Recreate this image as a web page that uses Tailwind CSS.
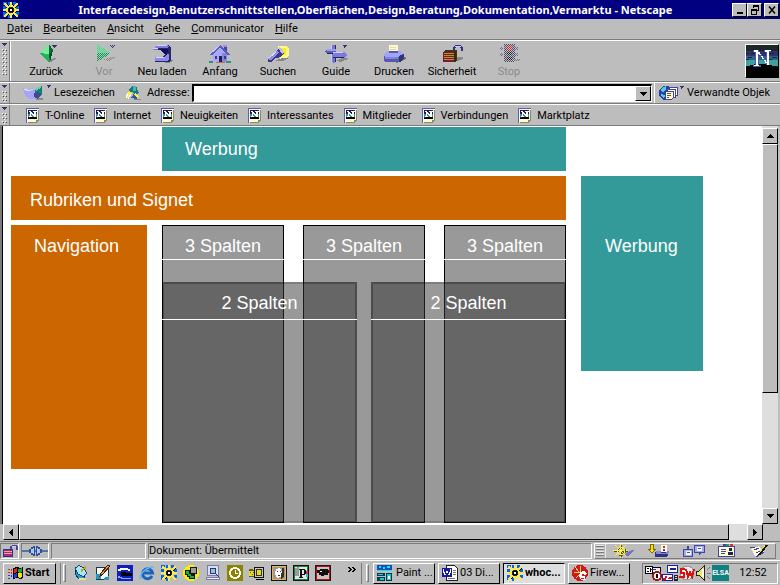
<!DOCTYPE html>
<html lang="de">
<head>
    <meta charset="UTF-8">
    <meta name="viewport" content="width=device-width, initial-scale=1.0">
    <title>Interfacedesign - Netscape</title>
    <script src="https://cdn.jsdelivr.net/npm/@tailwindcss/browser@4"></script>
</head>
<body class="flex min-h-screen flex-col overflow-hidden bg-[#bdbdbd] font-[Roboto,Arial,sans-serif] text-[11px] leading-[14px] text-black">

    <!-- shared icons -->
    <svg class="absolute size-0">
        <defs>
            <symbol id="dither" viewBox="0 0 24 20">
                <path d="M0 .5h24M0 2.500h24M0 4.500h24M0 6.500h24M0 8.500h24M0 10.500h24M0 12.500h24M0 14.500h24M0 16.500h24M0 18.500h24M1 1.500h23M1 3.500h23M1 5.500h23M1 7.500h23M1 9.500h23M1 11.500h23M1 13.500h23M1 15.500h23M1 17.500h23M1 19.500h23" stroke="#bdbdbd" stroke-dasharray="1 1"/>
            </symbol>
            <symbol id="wheel" viewBox="0 0 16 16">
                <path d="M0 0h4v3H0zM5 0h2v3H5zM10 0h3v3h-3zM0 4h3v3H0zM13 4h3v3h-3zM13 10h3v3h-3zM0 10h3v5H0zM5 13h2v3H5z" fill="#0068e8"/>
                <path d="M8 1v15M1 8h15M3 3l11 11M14 3L3 14" stroke="#000" stroke-width="2"/>
                <circle cx="8" cy="8" r="4" fill="none" stroke="#000" stroke-width="2"/>
                <path d="M7 0h2v4H7zM7 12h2v4H7zM0 7h4v2H0zM12 7h4v2h-4z" fill="#ffe84a"/>
                <path d="M1 1h2v1h1v1h1v2H3V4H2V3H1zM15 1v2h-1v1h-1v1h-2V3h1V2h1V1zM1 15v-2h1v-1h1v-1h2v2H4v1H3v1zM15 15h-2v-1h-1v-1h-1v-2h2v1h1v1h1z" fill="#ffe84a"/>
                <path d="M6 3h4v1h1v1h1v1h1v4h-1v1h-1v1h-1v1H6v-1H5v-1H4v-1H3V6h1V5h1V4h1zM6 5v1H5v4h1v1h4v-1h1V6h-1V5z" fill="#ffe84a" fill-rule="evenodd"/>
                <path d="M6 5h4v1H6zM5 6h1v4H5zM10 6h1v4h-1zM6 10h4v1H6z" fill="#222"/>
                <path d="M7 7h2v2H7z" fill="#fff"/>
            </symbol>
            <symbol id="page" viewBox="0 0 13 15">
                <path d="M0 0h13v12l-3 3H0z" fill="#fffbc8"/>
                <path d="M0 0h13v1H1v14H0z" fill="#5a5ac8"/>
                <path d="M2 2h9v9H2z" fill="#1c1c50"/>
                <path d="M2 6h9v3H2z" fill="#3a8fa0"/>
                <path d="M2 10l3-1h4l2 1v1H2z" fill="#000"/>
                <path d="M3 3h2v1h1v1h1v1h1V4H7V3h4v1h-1v5H8V8H7V7H6V6H5v2h1v1H3V8h1V4H3z" fill="#fff"/>
                <path d="M12 2h1v10h-1zM10 12h3v1h-1v1h-1v1h-1zM2 14h8v1H2z" fill="#8a8a70"/>
            </symbol>
            <symbol id="grip" viewBox="0 0 6 36">
                <path d="M0 0h5v1H4v1H3v1H2V2H1V1H0z" fill="#33336b"/>
                <path d="M0 6.500h1M3 6.500h1M0 10.500h1M3 10.500h1M0 14.500h1M3 14.500h1M0 18.500h1M3 18.500h1M0 22.500h1M3 22.500h1M0 26.500h1M3 26.500h1M0 30.500h1M3 30.500h1" stroke="#fff"/>
                <path d="M1 7.500h1M4 7.500h1M1 11.500h1M4 11.500h1M1 15.500h1M4 15.500h1M1 19.500h1M4 19.500h1M1 23.500h1M4 23.500h1M1 27.500h1M4 27.500h1M1 31.500h1M4 31.500h1" stroke="#444"/>
                <path d="M2 8.500h1M2 12.500h1M2 16.500h1M2 20.500h1M2 24.500h1M2 28.500h1" stroke="#fff"/>
            </symbol>
        </defs>
    </svg>

    <!-- title bar -->
    <header class="flex h-[19px] shrink-0 items-center bg-[#000080] pr-px pl-[3px] text-white">
        <svg class="size-4 shrink-0" shape-rendering="crispEdges"><use href="#wheel"/></svg>
        <h1 class="min-w-0 flex-1 overflow-hidden text-center font-['Noto_Sans',sans-serif] text-[11px] font-bold whitespace-nowrap">Interfacedesign,Benutzerschnittstellen,Oberflächen,Design,Beratung,Dokumentation,Vermarktu - Netscape</h1>
        <div class="flex text-black">
            <button aria-label="Minimieren" class="flex h-3.5 w-[15px] items-center justify-center border border-t-white border-r-black border-b-black border-l-white bg-[#bdbdbd]"><svg width="10" height="10" shape-rendering="crispEdges"><path d="M2 7h6v2H2z"/></svg></button>
            <button aria-label="Wiederherstellen" class="flex h-3.5 w-[15px] items-center justify-center border border-t-white border-r-black border-b-black border-l-white bg-[#bdbdbd]"><svg width="10" height="10" shape-rendering="crispEdges"><path d="M3 0h6v6H7V5h1V2H4v1H3zM1 4h6v6H1zM2 6v3h4V6z" fill-rule="evenodd"/></svg></button>
            <button aria-label="Schließen" class="ml-0.5 flex h-3.5 w-[15px] items-center justify-center border border-t-white border-r-black border-b-black border-l-white bg-[#bdbdbd]"><svg width="10" height="10"><path d="M2 1.500l6 7M8 1.500l-6 7" stroke="#000" stroke-width="1.500"/></svg></button>
        </div>
    </header>

    <!-- menu -->
    <nav class="flex h-[21px] shrink-0 items-center gap-[11px] border-b border-[#7b7b7b] pl-[7px]">
        <a href="#"><u>D</u>atei</a>
        <a href="#"><u>B</u>earbeiten</a>
        <a href="#"><u>A</u>nsicht</a>
        <a href="#"><u>G</u>ehe</a>
        <a href="#"><u>C</u>ommunicator</a>
        <a href="#"><u>H</u>ilfe</a>
    </nav>

    <!-- navigation toolbar -->
    <div class="flex h-[42px] shrink-0 items-center border-t border-b border-t-white border-b-[#7b7b7b]">
        <div class="flex h-full w-[10px] shrink-0 border-r border-[#7b7b7b] pt-0.5 pl-0.5"><svg width="6" height="36" shape-rendering="crispEdges"><use href="#grip"/></svg></div>
        <div class="flex h-full flex-1 border-l border-white pl-1.5">
            <button class="flex w-[58px] flex-col items-center gap-px pt-[3px]">
                <svg width="24" height="20" shape-rendering="crispEdges">
                    <path d="M14 17l6-3h2v1l-5 3z" fill="#888"/>
                    <path d="M5 9L15 0l4 6-3 12z" fill="#169447"/>
                    <path d="M5 9L15 0v10z" fill="#7be89b"/>
                    <path d="M5 9l10 1v8z" fill="#24b35a"/>
                    <path d="M15 0l4 6-4 4z" fill="#0c6b3c"/>
                    <path d="M15 10l4-4-3 12z" fill="#064c30"/>
                    <path d="M18 1h5v1h-1v1h-1v1h-1V3h-1V2h-1z" fill="#33336b"/>
                </svg>
                <span>Zurück</span>
            </button>
            <button disabled class="flex w-[58px] flex-col items-center gap-px pt-[3px] text-[#8a8a8a]">
                <svg width="24" height="20" shape-rendering="crispEdges">
                    <path d="M11 16l8-3h4v1l-6 3z" fill="#888"/>
                    <path d="M5 0v18l14-9z" fill="#00a050"/>
                    <path d="M5 0v9h14z" fill="#30e880"/>
                    <path d="M18 1h5v1h-1v1h-1v1h-1V3h-1V2h-1z" fill="#33336b"/>
                    <use href="#dither" width="24" height="20"/>
                </svg>
                <span>Vor</span>
            </button>
            <button class="flex w-[58px] flex-col items-center gap-px pt-[3px]">
                <svg width="24" height="20" shape-rendering="crispEdges">
                    <path d="M16 16h7v1l-4 2h-4z" fill="#888"/>
                    <path d="M7 1h11l3 2v13l-2 2H5v-5h8l2-3-5-4H3V4h2z" fill="#26266e"/>
                    <path d="M3 5l4-4h10l2 2-2 1H8v2H3z" fill="#7c7cdc"/>
                    <path d="M5 13h9l3-3h2v5l-2 2H5z" fill="#8c8cec"/>
                    <path d="M10 5h8l-1 6-6-4z" fill="#10105c"/>
                    <path d="M7 1.500h10M6 13.500h8M3 4.500h5" stroke="#d5d5ff"/>
                </svg>
                <span>Neu laden</span>
            </button>
            <button class="flex w-[58px] flex-col items-center gap-px pt-[3px]">
                <svg width="24" height="20" shape-rendering="crispEdges">
                    <path d="M1 17h5l-1 2H1zM19 17h4v2h-5z" fill="#2b9478"/>
                    <path d="M16 2h3v7h-3z" fill="#44448f"/>
                    <path d="M15 1h4v2h-4z" fill="#9494f0"/>
                    <path d="M5 9l7-6 7 6v9H5z" fill="#a9a9fa"/>
                    <path d="M14 9h5v9h-5z" fill="#8585e0"/>
                    <path d="M12 1L1 11h3l8-7 8 7h3z" fill="#5b5bc0"/>
                    <path d="M12 1L1 11" stroke="#c6c6ff"/>
                    <path d="M11 12h3v7h-3z" fill="#20204e"/>
                    <path d="M7 12h2v3H7zM16 12h2v3h-2z" fill="#3a3a88"/>
                    <path d="M8 18h9v1H8z" fill="#c86b52"/>
                </svg>
                <span>Anfang</span>
            </button>
            <button class="flex w-[58px] flex-col items-center gap-px pt-[3px]">
                <svg width="24" height="20" shape-rendering="crispEdges">
                    <path d="M12 2h8l3 3v7l-4 3h-5z" fill="#fff78a"/>
                    <path d="M15 4h5v7h-5z" fill="#ffe820"/>
                    <path d="M9 17l7-3h7l-6 3z" fill="#888"/>
                    <path d="M2 15l8-8 4-4 4 6-3 4-5 1-5 4H2z" fill="#3a3a88"/>
                    <path d="M3 14l8-7 2 2-8 7H3z" fill="#8d8de8"/>
                    <path d="M12 4l2-1 4 6-2 1z" fill="#b9b9ff"/>
                    <path d="M3 14l7-6" stroke="#dedeff"/>
                </svg>
                <span>Suchen</span>
            </button>
            <button class="flex w-[58px] flex-col items-center gap-px pt-[3px]">
                <svg width="24" height="20" shape-rendering="crispEdges">
                    <path d="M12 17l6-3h6v1l-7 3z" fill="#888"/>
                    <path d="M7 1h5v17l-2 1-3-1z" fill="#7474d2"/>
                    <path d="M11 1h1v17h-1z" fill="#282864"/>
                    <path d="M1 7l2-2h9v5H3z" fill="#5c5cba"/>
                    <path d="M3 5h9v2H3z" fill="#9c9cf2"/>
                    <path d="M9 8h11l3 3-3 3H9z" fill="#7c7cdc"/>
                    <path d="M9 13h11v1H9zM3 9h6v1H3z" fill="#26265e"/>
                    <path d="M9 8.500h10M7.500 1v4M7.500 10v8" stroke="#cfcfff"/>
                    <path d="M19 1h4v1h-1v1h-1v1h-1V2h-1z" fill="#33336b"/>
                </svg>
                <span>Guide</span>
            </button>
            <button class="flex w-[58px] flex-col items-center gap-px pt-[3px]">
                <svg width="24" height="20" shape-rendering="crispEdges">
                    <path d="M10 17l12-4h2v2l-9 4z" fill="#777"/>
                    <path d="M7 1h9v8H7z" fill="#fff8ce"/>
                    <path d="M8 3.500h6M8 5.500h6" stroke="#e4d8a8"/>
                    <path d="M2 10l4-3h13l3 4v4l-4 3H3l-1-2z" fill="#5656b4"/>
                    <path d="M2 10l4-3h1v2h9V7h3l2 3-4 3H3z" fill="#a4a4f6"/>
                    <path d="M3 13h13v2H3z" fill="#8383e0"/>
                    <path d="M17 12l5-2v5l-4 3h-1z" fill="#33337a"/>
                    <path d="M13 14h2v1h-2z" fill="#00d020"/>
                </svg>
                <span>Drucken</span>
            </button>
            <button class="flex w-[58px] flex-col items-center gap-px pt-[3px]">
                <svg width="24" height="20" shape-rendering="crispEdges">
                    <path d="M16 13h7v2l-6 2z" fill="#888"/>
                    <path d="M14 8V4l2-2h4l2 2v3" fill="none" stroke="#33338c" stroke-width="2"/>
                    <path d="M15 3l2-1h4" fill="none" stroke="#ccf"/>
                    <path d="M3 8l2-2h12v10l-2 2H3z" fill="#48301a"/>
                    <path d="M3 8h11v10H3z" fill="#801830"/>
                    <path d="M4 9.500h10M4 11.500h10M4 13.500h10M4 15.500h10" stroke="#a89828"/>
                    <path d="M14 8l2-2v10l-2 2z" fill="#303000"/>
                </svg>
                <span>Sicherheit</span>
            </button>
            <button disabled class="flex w-[56px] flex-col items-center gap-px pt-[3px] text-[#8a8a8a]">
                <svg width="24" height="20" shape-rendering="crispEdges">
                    <path d="M7 0h11v18H7z" fill="#50506c"/>
                    <path d="M3 3h3v3H3zM3 9h3v3H3zM18 3h3v3h-3zM18 9h3v3h-3z" fill="#6c6ca0"/>
                    <path d="M10 2h5v4h-5z" fill="#f02020"/>
                    <path d="M10 8h5v3h-5zM10 13h5v3h-5z" fill="#222"/>
                    <path d="M15 15h8v2h-7z" fill="#777"/>
                    <use href="#dither" width="24" height="20"/>
                </svg>
                <span>Stop</span>
            </button>
        </div>
        <button aria-label="Netscape" class="mr-px border border-t-white border-r-black border-b-black border-l-white">
            <svg width="32" height="32" shape-rendering="crispEdges" class="block">
                <path d="M0 0h32v32H0z" fill="#1c2828"/>
                <path d="M0 6h32v5H0z" fill="#30306c"/>
                <path d="M0 11h32v4H0z" fill="#2b6480"/>
                <path d="M0 15h32v6H0z" fill="#3fa0a0"/>
                <path d="M0 8h3v1H0zM5 8h4v1H5zM24 8h4v1h-4zM2 12h4v1H2zM26 12h5v1h-5zM0 14h3v1H0zM22 14h4v1h-4z" fill="#15203c"/>
                <path d="M0 21h4v-1h4v-1h14v1h4v1h4v1h2v10H0z" fill="#000"/>
                <path d="M7 5h6v2h1v2h2v2h1v2h2v2h1V7h-2V5h7v2h-2v13h-3v-2h-1v-2h-2v-2h-1v-2h-2v-2h-1v10h2v2H7v-2h2V7H7z" fill="#5252ba"/>
                <path d="M8 5h4v2h2v2h1v2h2v2h1v2h2v2h1V7h-2V5h6v1h-2v14h-2v-2h-2v-2h-1v-2h-2v-2h-1v-2h-2V9h-1v11h1v1H8v-1h2V7H8z" fill="#fff"/>
            </svg>
        </button>
    </div>

    <!-- location bar -->
    <div class="flex h-[22px] shrink-0 items-center border-t border-b border-t-white border-b-[#7b7b7b]">
        <div class="h-full w-[10px] shrink-0 overflow-hidden border-r border-[#7b7b7b] pt-0.5 pl-0.5"><svg width="6" height="36" shape-rendering="crispEdges"><use href="#grip"/></svg></div>
        <button class="ml-3 flex items-center gap-0.5">
            <svg width="30" height="16" shape-rendering="crispEdges">
                <path d="M12 13h9v2h-7z" fill="#888"/>
                <path d="M12 5l8-4v9l-6 4z" fill="#14806c"/>
                <path d="M13 4l6-3v2l-5 3z" fill="#62d0b0"/>
                <path d="M1 3l5 2 4-2 3 3 2 8H8l-5-3z" fill="#a4a4fa"/>
                <path d="M12 8l3-1 4 2-3 5-4-2z" fill="#44449a"/>
                <path d="M2 4l5 2 4-2" fill="none" stroke="#dedeff"/>
                <path d="M25 0h4v1h-1v1h-1v1h-1V1h-1z" fill="#33336b"/>
            </svg>
            Lesezeichen
        </button>
        <svg class="ml-2.5 shrink-0" width="16" height="15" shape-rendering="crispEdges">
            <path d="M8 13h8v1H9z" fill="#888"/>
            <path d="M5 2l3-2h3l3 7-4 2-3-4-3 5H2z" fill="#187a78"/>
            <path d="M8 0h3v5H8z" fill="#4cb4ac"/>
            <path d="M1 9l3-4 3 2-4 5H1z" fill="#ffee40"/>
            <path d="M6 12l4-6 4 5-3 2z" fill="#2c54b8"/>
            <path d="M9 8l2-1 3 4-2 1z" fill="#ffee40"/>
            <path d="M3 7l-2 5M6 8l-3 5" stroke="#fff"/>
        </svg>
        <label for="adresse" class="ml-1.5 pr-0.5">Adresse:</label>
        <div class="flex h-[18px] min-w-0 flex-1 border-t-2 border-r border-b border-l-2 border-t-black border-r-white border-b-white border-l-black bg-white">
            <input id="adresse" type="text" class="min-w-0 flex-1 px-1 outline-none">
            <button aria-label="Adressliste öffnen" class="flex w-4 items-center justify-center border border-t-white border-r-black border-b-black border-l-white bg-[#bdbdbd]"><svg width="7" height="4" shape-rendering="crispEdges"><path d="M0 0h7v1H6v1H5v1H4v1H3V3H2V2H1V1H0z"/></svg></button>
        </div>
        <div class="ml-0.5 h-full border-l border-white"></div>
        <button class="mr-2.5 ml-1 flex items-center gap-0.5 whitespace-nowrap">
            <svg width="26" height="16" shape-rendering="crispEdges">
                <circle cx="7" cy="8" r="7" fill="#2442a8"/>
                <path d="M3 3l4-2v3L4 7 2 6zM2 9l4 1-1 4-2-2z" fill="#4fd0d8"/>
                <path d="M10.500 2.500h8v8h-8z" fill="#fff" stroke="#4444a0"/>
                <path d="M8.500 4.500h8v8h-8z" fill="#fff" stroke="#4444a0"/>
                <path d="M6.500 6.500h8v6l-2 2h-6z" fill="#fffbc8" stroke="#4444a0"/>
                <path d="M8 8.500h4M8 10.500h4M8 12.500h2" stroke="#555"/>
                <path d="M21 1h4v1h-1v1h-1v1h-1V2h-1z" fill="#33336b"/>
            </svg>
            Verwandte Objek
        </button>
    </div>

    <!-- personal toolbar -->
    <div class="flex h-[22px] shrink-0 items-center overflow-hidden border-t border-b border-t-white border-b-[#7b7b7b]">
        <div class="h-full w-[10px] shrink-0 overflow-hidden border-r border-[#7b7b7b] pt-0.5 pl-0.5"><svg width="6" height="36" shape-rendering="crispEdges"><use href="#grip"/></svg></div>
        <div class="flex gap-2.5 pt-px pl-4 whitespace-nowrap">
            <a href="#" class="flex items-center gap-1.5"><svg width="13" height="15" shape-rendering="crispEdges"><use href="#page"/></svg>T-Online</a>
            <a href="#" class="flex items-center gap-1.5"><svg width="13" height="15" shape-rendering="crispEdges"><use href="#page"/></svg>Internet</a>
            <a href="#" class="flex items-center gap-1.5"><svg width="13" height="15" shape-rendering="crispEdges"><use href="#page"/></svg>Neuigkeiten</a>
            <a href="#" class="flex items-center gap-1.5"><svg width="13" height="15" shape-rendering="crispEdges"><use href="#page"/></svg>Interessantes</a>
            <a href="#" class="flex items-center gap-1.5"><svg width="13" height="15" shape-rendering="crispEdges"><use href="#page"/></svg>Mitglieder</a>
            <a href="#" class="flex items-center gap-1.5"><svg width="13" height="15" shape-rendering="crispEdges"><use href="#page"/></svg>Verbindungen</a>
            <a href="#" class="flex items-center gap-1.5"><svg width="13" height="15" shape-rendering="crispEdges"><use href="#page"/></svg>Marktplatz</a>
        </div>
    </div>

    <!-- page and vertical scrollbar -->
    <div class="flex flex-1 border-l-2 border-[#7b7b7b] pr-0.5">
        <main class="flex min-w-0 flex-1 gap-[15px] overflow-hidden border-l border-black bg-white pt-px pl-2 font-['Liberation_Sans',Arial,sans-serif] text-lg leading-[22px] text-white">
            <div class="flex w-[555px] shrink-0 flex-col gap-[5px]">
                <div class="ml-[151px] flex h-11 items-center bg-[#339999] pl-[23px]">Werbung</div>
                <div class="flex h-11 items-center bg-[#cc6600] pt-1 pl-[19px]">Rubriken und Signet</div>
                <div class="flex flex-1 items-start gap-[15px]">
                    <div class="h-[244px] w-[136px] bg-[#cc6600] pt-2.5 pl-[23px]">Navigation</div>
                    <div class="relative flex h-[298px] flex-1 justify-between text-center">
                        <section class="w-[122px] border border-black bg-[#999999]"><h2 class="-mx-px h-[34px] border-b border-white pt-[9px]">3 Spalten</h2></section>
                        <section class="w-[122px] border border-black bg-[#999999]"><h2 class="-mx-px h-[34px] border-b border-white pt-[9px]">3 Spalten</h2></section>
                        <section class="w-[122px] border border-black bg-[#999999]"><h2 class="-mx-px h-[34px] border-b border-white pt-[9px]">3 Spalten</h2></section>
                        <!-- two-column variant lies over the three columns -->
                        <div class="absolute inset-x-0 top-[57px] bottom-0 flex justify-between">
                            <section class="w-[195px] border-2 border-black/50 bg-[#333333]/50 bg-clip-padding"><h2 class="-mx-0.5 h-9 border-b border-white pt-2">2 Spalten</h2></section>
                            <section class="w-[195px] border-2 border-black/50 bg-[#333333]/50 bg-clip-padding"><h2 class="-mx-0.5 h-9 border-b border-white pt-2">2 Spalten</h2></section>
                        </div>
                    </div>
                </div>
            </div>
            <aside class="mt-[49px] h-[195px] w-[122px] shrink-0 bg-[#339999] pt-[59px] pl-6">Werbung</aside>
        </main>
        <div class="flex w-4 shrink-0 flex-col bg-[#dedede] pt-0.5">
            <button aria-label="Nach oben" class="flex h-4 items-center justify-center border border-t-white border-r-black border-b-black border-l-white bg-[#bdbdbd]"><svg width="7" height="4" shape-rendering="crispEdges"><path d="M3 0h1v1h1v1h1v1h1v1H0V3h1V2h1V1h1z"/></svg></button>
            <div class="h-[249px] border border-t-white border-r-black border-b-black border-l-white bg-[#bdbdbd]"></div>
            <button aria-label="Nach unten" class="mt-auto flex h-4 items-center justify-center border border-t-white border-r-black border-b-black border-l-white bg-[#bdbdbd]"><svg width="7" height="4" shape-rendering="crispEdges"><path d="M0 0h7v1H6v1H5v1H4v1H3V3H2V2H1V1H0z"/></svg></button>
        </div>
    </div>

    <!-- horizontal scrollbar -->
    <div class="flex h-[17px] shrink-0 pr-[17px] pb-px pl-[3px]">
        <button aria-label="Nach links" class="flex w-4 items-center justify-center border border-t-white border-r-black border-b-black border-l-white"><svg width="4" height="7" shape-rendering="crispEdges"><path d="M3 0h1v7H3V6H2V5H1V4H0V3h1V2h1V1h1z"/></svg></button>
        <div class="flex flex-1 bg-[#dedede] pr-[18px]"><div class="flex-1 border border-t-white border-r-black border-b-black border-l-white bg-[#bdbdbd]"></div></div>
        <button aria-label="Nach rechts" class="flex w-4 items-center justify-center border border-t-white border-r-black border-b-black border-l-white"><svg width="4" height="7" shape-rendering="crispEdges"><path d="M0 0h1v1h1v1h1v1h1v1H3v1H2v1H1v1H0z"/></svg></button>
    </div>

    <!-- status bar -->
    <footer class="flex h-[19px] shrink-0 items-center gap-0.5 border-t border-[#7b7b7b] pt-px pr-1 pb-px">
        <div class="flex h-4 w-[19px] items-center justify-center border border-t-[#7b7b7b] border-r-white border-b-white border-l-[#7b7b7b]">
            <svg width="16" height="14" shape-rendering="crispEdges">
                <path d="M9 6V3l2-1h3l1 1v3" fill="none" stroke="#4444a0" stroke-width="2"/>
                <path d="M10 2.500h4" stroke="#ccf"/>
                <path d="M1 5h10v8H1z" fill="#33338c"/>
                <path d="M2 6h8v6H2z" fill="#b02868"/>
                <path d="M2 7.500h8M2 9.500h8" stroke="#e0a0c0"/>
            </svg>
        </div>
        <div class="flex h-4 w-7 items-center justify-center border border-t-[#7b7b7b] border-r-white border-b-white border-l-[#7b7b7b]">
            <svg width="26" height="12" shape-rendering="crispEdges">
                <path d="M0 5h26v2H0z" fill="#4878a8"/>
                <path d="M7 4h2V2h2V1h2v10h-2v-1H9V8H7zM14 1h2v1h2v2h2v4h-2v2h-2v1h-2z" fill="#33508c"/>
                <path d="M9 4h2V3h1v6h-1V8H9zM15 3h1v1h2v4h-2v1h-1z" fill="#a8c8f8"/>
            </svg>
        </div>
        <div class="h-4 w-[95px] border border-t-[#7b7b7b] border-r-white border-b-white border-l-[#7b7b7b]"></div>
        <div class="flex h-4 flex-1 items-center border border-t-[#7b7b7b] border-r-white border-b-white border-l-[#7b7b7b]">Dokument: Übermittelt</div>
        <div class="flex h-4 w-[182px] items-center border border-t-white border-r-[#7b7b7b] border-b-[#7b7b7b] border-l-white">
            <svg width="11" height="14" shape-rendering="crispEdges"><path d="M1 2.500h8M1 5.500h8M1 8.500h8M1 11.500h8" stroke="#7b7b7b"/><path d="M1 1.500h8M1 4.500h8M1 7.500h8M1 10.500h8M10.500 0v14" stroke="#e6e6e6"/></svg>
            <div class="flex flex-1 items-center justify-around">
                <button aria-label="Navigator"><svg class="block" width="22" height="14" shape-rendering="crispEdges">
                    <path d="M10 11l9-5h3l-7 6z" fill="#7373c0"/>
                    <path d="M8 1h1v12H8zM1 7h14v1H1z" fill="#555020"/>
                    <path d="M7.500 0v13M0 6.500h15M2 1l11 11M13 1L2 12" stroke="#ffec4a"/>
                    <path d="M6 3h4v1h1v1h1v4h-1v1h-1v1H6v-1H5V9H4V5h1V4h1zM6 4v1H5v4h1v1h4V9h1V5h-1V4z" fill="#ffec4a" fill-rule="evenodd"/>
                    <path d="M6 4h1v1H6zM5 5h1v1H5zM9 9h1v1H9zM10 8h1v1h-1zM6 11h4v1H6zM12 5h1v4h-1z" fill="#555020"/>
                </svg></button>
                <button aria-label="Posteingang"><svg class="block" width="22" height="14" shape-rendering="crispEdges">
                    <path d="M7 8h14l-2 5H7z" fill="#32327a"/>
                    <path d="M8 7h5v2h5V7h3v2l-2 1H8z" fill="#8484dc"/>
                    <path d="M13 1h6v7h-6z" fill="#fffbe0"/>
                    <path d="M15 2h2v2h-2z" fill="#c03030"/><path d="M15 5h2v2h-2z" fill="#4444a0"/>
                    <path d="M2 0h4v5h2v1H7v1H6v1H5v1H3V8H2V7H1V6H0V5h2z" fill="#7a6a00"/>
                    <path d="M3 1h2v5h1v1H5v1H3V7H2V6h1z" fill="#ffe000"/>
                </svg></button>
                <button aria-label="Diskussionen"><svg class="block" width="22" height="14" shape-rendering="crispEdges">
                    <path d="M0 5h4V2h2v3h4v8H0zM11 1h11v8h-4v1h-1v1h-1V9h-5z" fill="#4444a0"/>
                    <path d="M1 6h8v6H1zM12 2h9v6h-9z" fill="#a6a6fa"/>
                    <path d="M3 7h5v4H3zM14 3h5v4h-5z" fill="#effff0"/>
                    <path d="M4 8.500h3M15 4.500h3" stroke="#207050"/>
                </svg></button>
                <button aria-label="Adressbuch"><svg class="block" width="18" height="14" shape-rendering="crispEdges">
                    <path d="M.5 2.500h16v10H.5z" fill="#fffbd0" stroke="#4444a0"/>
                    <path d="M5 0h3v2H5z" fill="#4444a0"/><path d="M8 0h3v2H8z" fill="#14a060"/><path d="M12 0h3v2h-3z" fill="#e03030"/>
                    <path d="M3 5.500h5M3 7.500h5M3 9.500h4" stroke="#4444a0"/>
                    <path d="M11 4h3v3h-3zM10 8h5v3h-5z" fill="#22224e"/>
                </svg></button>
                <button aria-label="Composer"><svg class="block" width="20" height="14" shape-rendering="crispEdges">
                    <path d="M2 5l8-3 5 6-8 5z" fill="#fffbe0"/>
                    <path d="M1 4l5-1M5 6l5-2M7 9l4-2M7 13l8-5" stroke="#4444a0"/>
                    <path d="M18 1l-8 10" stroke="#111" stroke-width="2"/>
                    <path d="M16 1l-5 7" stroke="#ffe13a"/>
                </svg></button>
            </div>
        </div>
    </footer>

    <!-- taskbar -->
    <footer class="flex h-[25px] shrink-0 items-center border-t border-white pr-0.5 pl-[3px] whitespace-nowrap">
        <button class="flex h-[21px] w-[53px] items-center gap-px border border-t-white border-r-black border-b-black border-l-white pl-[3px] font-bold">
            <svg width="17" height="14" shape-rendering="crispEdges">
                <path d="M6 2l4-1 3 1 3-1v11l-3 1-3-1-4 1z" fill="#000"/>
                <path d="M7 3l3-1v4l-3 1z" fill="#f02020"/><path d="M11 3h2l2-1v4l-2 1-2-1z" fill="#10b030"/>
                <path d="M7 8l3-1v4l-3 1z" fill="#1040f0"/><path d="M11 7h4v4l-2 1-2-1z" fill="#ffe000"/>
                <path d="M1 3h2v1H1zM4 3h1v2H4zM1 6h2v1H1zM4 6h1v2H4z" fill="#e02020"/>
                <path d="M1 9h2v1H1zM4 9h1v2H4zM1 12h2v1H1z" fill="#2040d0"/>
            </svg>
            Start
        </button>
        <div class="ml-1 h-[21px] border-l border-[#7b7b7b]"></div>
        <div class="ml-0.5 h-[18px] w-[3px] border border-t-white border-r-[#7b7b7b] border-b-[#7b7b7b] border-l-white"></div>
        <div class="ml-[7px] flex items-center gap-1.5">
            <button aria-label="Satellit"><svg class="block" width="16" height="16" shape-rendering="crispEdges"><path d="M2 2l10 10-2 2H6L2 9z" fill="#28a0e0" stroke="#135"/><ellipse cx="8" cy="6" rx="6" ry="4" fill="#a4e8ff" stroke="#246" transform="rotate(45 8 6)"/><path d="M8 6l5-4" stroke="#d0a000" stroke-width="2"/><path d="M6 13h5l2 2H5z" fill="#f0e090"/></svg></button>
            <button aria-label="Desktop"><svg class="block" width="16" height="16" shape-rendering="crispEdges"><path d="M1 2h12v12H1z" fill="#f8f8f0" stroke="#234"/><path d="M1 9h6l-1 5H1zM9 13l5-2v4H9z" fill="#2498c0"/><path d="M15 1l-7 8-3 2 1-3 7-8z" fill="#e0a040" stroke="#421"/></svg></button>
            <button aria-label="Bildbearbeitung"><svg class="block" width="16" height="16" shape-rendering="crispEdges"><path d="M0 0h16v16H0z" fill="#1020c0"/><path d="M1 6V4h2V3h8v1h2v2h-2V5H4v1z" fill="#fff"/><path d="M4 7h5v4H4zM9 8h6v3H9z" fill="#000"/><path d="M1 11h2v1h2v1h9v1H4v-1H1z" fill="#80b0ff"/></svg></button>
            <button aria-label="Internet Explorer"><svg class="block" width="16" height="16"><path d="M13 11a5 5 0 1 1 .5-3H5" fill="none" stroke="#1666c0" stroke-width="3"/><path d="M2 14C-1 9 9 1 15 2" fill="none" stroke="#60b8f8" stroke-width="1.500"/></svg></button>
            <button aria-label="Netscape"><svg class="block size-4" shape-rendering="crispEdges"><use href="#wheel"/></svg></button>
            <button aria-label="Telefon"><svg class="block" width="16" height="16" shape-rendering="crispEdges"><circle cx="8" cy="8" r="8" fill="#f8f000"/><path d="M7 2h7v7h-2v3H7z" fill="#111"/><path d="M8 3h5v5H8z" fill="#9a9a9a"/><path d="M2 5h5v3h2v2h3v4H6v-2H4v-2H2z" fill="#111"/><path d="M3 6h3v3h2v2h3v2H7v-2H5V9H3z" fill="#10b048"/></svg></button>
            <button aria-label="Suche"><svg class="block" width="16" height="16" shape-rendering="crispEdges"><path d="M2.500.5h11v10h-11z" fill="#dcdcf4" stroke="#7a7ab0"/><circle cx="8" cy="6" r="3" fill="#80c8f0" stroke="#335"/><path d="M1.500 12.500h13v2h-13z" fill="#ececf8" stroke="#7a7ab0"/><path d="M10 8l4 4" stroke="#336"/></svg></button>
            <button aria-label="Outlook"><svg class="block" width="16" height="16" shape-rendering="crispEdges"><path d="M0 0h16v16H0z" fill="#8c8400"/><circle cx="8" cy="8" r="5" fill="none" stroke="#fff" stroke-width="2"/><path d="M8 5v3h3" fill="none" stroke="#fff"/></svg></button>
            <button aria-label="Ordner"><svg class="block" width="16" height="16" shape-rendering="crispEdges"><path d="M0 4h4l1 1h5v7H0z" fill="#f0e000"/><path d="M0 4h4v1h2v1H0zM0 11h7v1H0zM1 7h1v1H1zM3 9h1v1H3zM4 7h1v1H4z" fill="#555"/><path d="M5 2h10v11H5z" fill="#111"/><path d="M6 3h8v9H6z" fill="#c8c8c8"/><path d="M7 4h6v7H7z" fill="#333"/><path d="M8 5h4v5H8z" fill="#e8e000"/><path d="M7 14h8v1H7z"/></svg></button>
            <button aria-label="Acrobat"><svg class="block" width="16" height="16" shape-rendering="crispEdges"><path d="M.5.5h15v15H.5z" fill="#f0b050" stroke="#111"/><path d="M2 2h12v12H2z" fill="#999"/><path d="M5 4l4-1 2 4-1 5-4 1-2-4z" fill="#fff"/><path d="M6 6h1v1H6zM9 6h1v1H9zM7 10h2v1H7zM11 3h2v9l-3 2z" fill="#333"/></svg></button>
            <button aria-label="PageMill"><svg class="block" width="16" height="16" shape-rendering="crispEdges"><path d="M.5.5h15v15H.5z" fill="#108a38" stroke="#111"/><path d="M2 2h12v12H2z" fill="#e4e4e4"/><path d="M2 3l4-1v9H2z" fill="#999"/><path d="M6 4h6v1h1v4h-1v1H9v2h1v1H6v-1h1V5H6zM9 5v4h2V5z" fill="#111" fill-rule="evenodd"/><path d="M13 6h2v3h-2z" fill="#e03030"/><path d="M13 9h2v3h-2z" fill="#20c0e0"/></svg></button>
            <button aria-label="Photoshop"><svg class="block" width="16" height="16" shape-rendering="crispEdges"><path d="M.5.5h15v15H.5z" fill="#a81818" stroke="#311"/><path d="M2 2h12v12H2z" fill="#c4c4c4"/><path d="M2 5h3V4h8v1h1v3h-1v2H9v1H6v-1H4V8H2z" fill="#111"/><path d="M5 6h2v1H5z" fill="#fff"/></svg></button>
        </div>
        <button aria-label="Weitere Symbole" class="ml-[17px]"><svg class="block" width="9" height="14" shape-rendering="crispEdges"><path d="M0 1h2v1h1v1h1v1H3v1H2v1H0V5h1V4h1V3H1V2H0zM4 1h2v1h1v1h1v1H7v1H6v1H4V5h1V4h1V3H5V2H4z"/></svg></button>
        <div class="ml-1 h-[21px] border-l border-[#7b7b7b]"></div>
        <div class="mx-1 h-[18px] w-[3px] border border-t-white border-r-[#7b7b7b] border-b-[#7b7b7b] border-l-white"></div>
        <div class="flex gap-[3px]">
            <button class="flex h-[21px] w-[62px] items-center gap-1 border border-t-white border-r-black border-b-black border-l-white pl-[3px]">
                <svg width="15" height="16" shape-rendering="crispEdges"><path d="M0 0h15v6H0z" fill="#1050c0"/><path d="M2 1h2v2H2zM6 2h2v2H6zM10 1h3v2h-3zM0 5h15v1H0z" fill="#20e0e0"/><path d="M0 8h8v3H0zM0 12h8v4H0zM9 8h6v8H9z" fill="#083848"/><path d="M1 9h5v1H1zM3 13h4v2H3zM10 9h4v6h-4z" fill="#20c8d0"/><path d="M11 11h2v3h-2z" fill="#fff"/></svg>
                Paint ...
            </button>
            <button class="flex h-[21px] w-[62px] items-center gap-0.5 border border-t-white border-r-black border-b-black border-l-white pl-[3px]">
                <svg width="16" height="16" shape-rendering="crispEdges"><path d="M4.500.5h8l3 3v12h-11z" fill="#fff" stroke="#222"/><path d="M11 5.500h3M11 7.500h3M11 9.500h3M6 13.500h7" stroke="#777"/><path d="M0 3h10v9H0z" fill="#1818a0"/><path d="M1 4h1v3h1v2h1V6h2v3h1V7h1V4h1v4H8v2H6V8H4v2H2V8H1z" fill="#fff"/></svg>
                03 Di...
            </button>
            <button class="flex h-[21px] w-[62px] items-center gap-0.5 border border-t-black border-r-white border-b-white border-l-black bg-[#dedede] pl-[3px] font-bold">
                <svg class="size-4 shrink-0" shape-rendering="crispEdges"><use href="#wheel"/></svg>
                whoc...
            </button>
            <button class="flex h-[21px] w-[62px] items-center gap-0.5 border border-t-white border-r-black border-b-black border-l-white pl-[3px]">
                <svg width="16" height="16" shape-rendering="crispEdges"><circle cx="8" cy="8" r="8" fill="#d01818"/><path d="M3 2l4 5M8 1l1 6M2 7l6 1M4 13l4-4" stroke="#ffd060"/><path d="M8 7l4-1 3 3-3 1 2 5H9l-2-4z" fill="#fff"/><path d="M10 9h2v2h-2zM9 13h3v1H9z" fill="#d01818"/></svg>
                Firew...
            </button>
        </div>
        <div class="ml-auto flex h-[21px] w-[136px] items-center border border-t-[#7b7b7b] border-r-white border-b-white border-l-[#7b7b7b] pl-0.5">
            <svg width="17" height="16" shape-rendering="crispEdges"><path d="M0 1h8v8H0z"/><path d="M1 2h6v6H1z" fill="#fff"/><path d="M2 3h2v1H2zM2 6h2v1H2zM5 3h1v4H5z"/><path d="M8 2h8v7H8z"/><path d="M8 3h7v5H8z" fill="#eee"/><path d="M6 4h5v1H6z" fill="#2030c0"/><circle cx="12" cy="11" r="4" fill="#fff" stroke="#b01010" stroke-width="2"/><path d="M11 9h2v4h-2z"/></svg>
            <svg width="17" height="16" shape-rendering="crispEdges"><path d="M5 0h11v8H5zM0 9h11v7H0z" fill="#1820a8"/><path d="M6 1h9v6H6zM1 10h9v5H1z" fill="#fff"/><path d="M8 3h6v2H8z" fill="#1820a8"/><path d="M1 13h2v-2h2v2h2v-1h3v2H6v-1H4v2H1z" fill="#e01010"/><path d="M12 10h4v6h-4z" fill="#222"/><path d="M13 11h2v1h-2zM13 13h2v1h-2z" fill="#ddd"/></svg>
            <svg width="16" height="16" shape-rendering="crispEdges"><circle cx="8" cy="8" r="7" fill="#f0f0f0" stroke="#999"/><path d="M6 4H2v4h3v4H0M7 4l2 8 2-5 2 5 2-8" fill="none" stroke="#e01010" stroke-width="2"/></svg>
            <svg width="17" height="16" shape-rendering="crispEdges"><path d="M1 6h3l5-5v14l-5-5H1z" fill="#ece860" stroke="#222"/><path d="M7 4h2v8H7z" fill="#fff"/><path d="M12 5l3-3M12 8h4M12 11l3 3" stroke="#777"/></svg>
            <span class="flex h-4 w-[17px] items-center justify-center bg-[#108080] text-[7px] leading-[8px] font-bold text-white">ELSA</span>
            <time class="flex-1 text-center">12:52</time>
        </div>
    </footer>
</body>
</html>
